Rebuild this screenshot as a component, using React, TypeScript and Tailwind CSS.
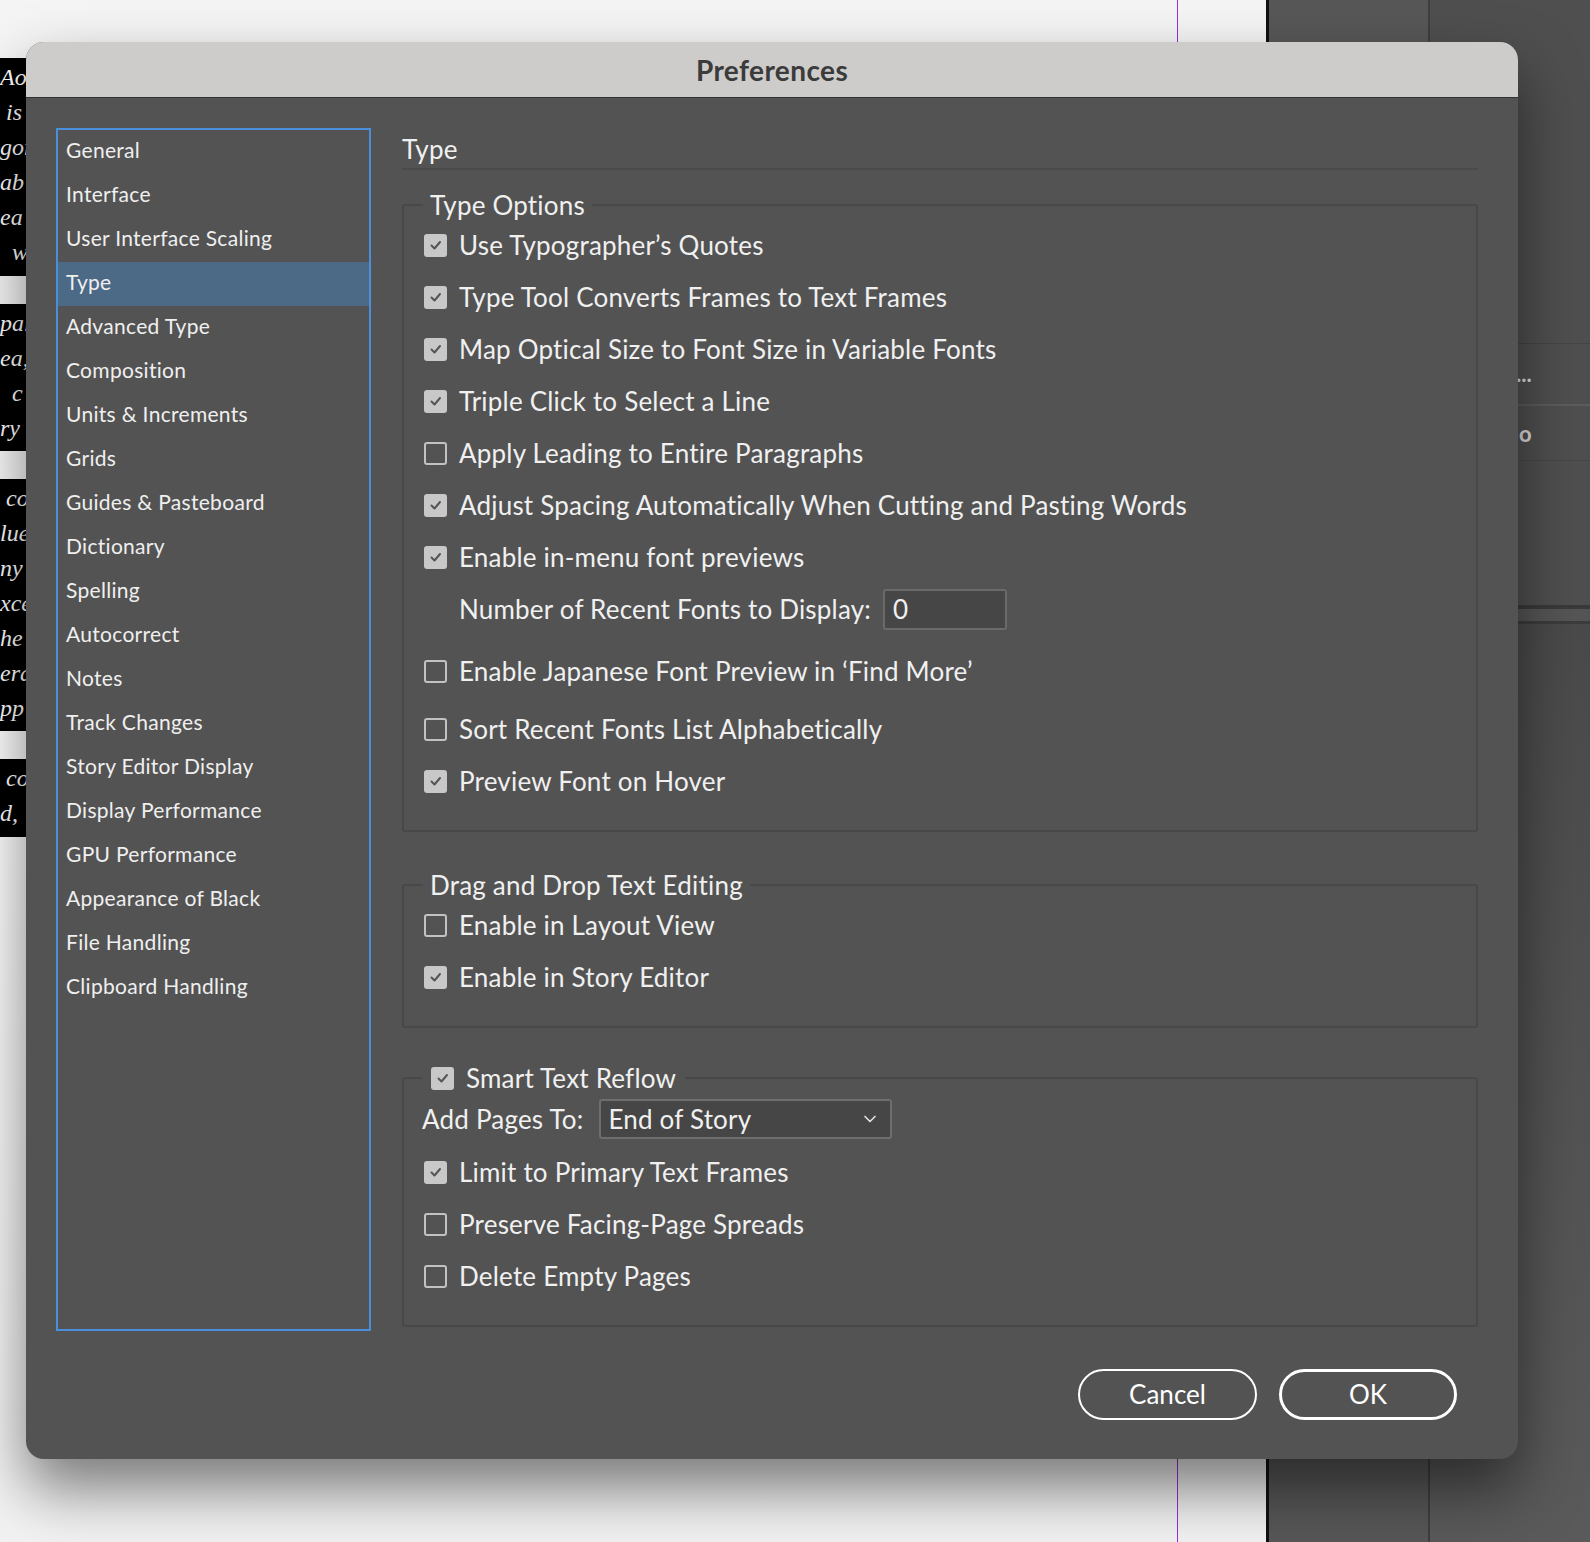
import React from 'react';
import { ChevronDown } from 'lucide-react';

const navItems = [
  'General',
  'Interface',
  'User Interface Scaling',
  'Type',
  'Advanced Type',
  'Composition',
  'Units & Increments',
  'Grids',
  'Guides & Pasteboard',
  'Dictionary',
  'Spelling',
  'Autocorrect',
  'Notes',
  'Track Changes',
  'Story Editor Display',
  'Display Performance',
  'GPU Performance',
  'Appearance of Black',
  'File Handling',
  'Clipboard Handling',
];

const Box: React.FC<{ on: boolean }> = ({ on }) =>
  on ? (
    <span className="w-[23px] h-[23px] rounded-[3px] bg-[#c8c8c8] flex items-center justify-center shrink-0">
      <svg width="16" height="16" viewBox="0 0 16 16">
        <path d="M3.5 8.5l3 3 5.5-6.5" fill="none" stroke="#555555" strokeWidth="2" strokeLinecap="round" strokeLinejoin="round" />
      </svg>
    </span>
  ) : (
    <span className="w-[23px] h-[23px] rounded-[3px] border-2 border-[#c2c2c2] shrink-0" />
  );

const Row: React.FC<{ on: boolean; label: string; className?: string }> = ({ on, label, className = '' }) => (
  <div className={`flex items-center h-[52px] gap-[12px] ${className}`}>
    <Box on={on} />
    <span>{label}</span>
  </div>
);

const scribbles = [
  { h: 'h-[218px]', lines: ['Ao', ' is', 'gor', 'ab', 'ea', '  w'] },
  { h: 'h-[147px]', lines: ['pal', 'ea,', '  c', 'ry'] },
  { h: 'h-[252px]', lines: [' co', 'lue', 'ny', 'xce', 'he', 'era', 'pp'] },
  { h: 'h-[78px]', lines: [' co', 'd,'] },
];

export default function App() {
  return (
    <div className="relative w-[1590px] h-[1542px] overflow-hidden bg-white [font-family:Lato,'Open_Sans',sans-serif]">
      {/* background: document + panels */}
      <div className="flex h-full">
        <div className="flex w-[1266px] h-full bg-gradient-to-b from-[#f4f4f4] via-white to-[#f2f2f2]">
          <div className="w-[26px] flex flex-col pt-[58px] gap-[28px] overflow-hidden">
            {scribbles.map((s, i) => (
              <div key={i} className={`${s.h} bg-black text-white italic text-[24px] leading-[35px] pt-[2px] whitespace-pre [font-family:'Liberation_Serif',serif]`}>
                {s.lines.map((l, j) => (
                  <div key={j}>{l}</div>
                ))}
              </div>
            ))}
          </div>
          <div className="w-[1151px]" />
          <div className="w-px h-full bg-[#9b2fd6]" />
        </div>
        <div className="w-[3px] h-full bg-[#111111]" />
        <div className="flex flex-1 h-full">
          <div className="w-[159px] h-full bg-[#575757]" />
          <div className="w-[2px] h-full bg-[#3f3f3f]" />
          <div className="flex-1 h-full bg-[#4f4f4f] flex flex-col text-[#dedede] font-bold text-[22px]">
            <div className="h-[344px] border-b border-[#454545]" />
            <div className="h-[62px] flex items-center pl-[86px] border-b-2 border-[#5c5c5c] leading-none">...</div>
            <div className="h-[55px] flex items-center pl-[89px] border-b border-[#474747]">o</div>
            <div className="h-[144px]" />
            <div className="h-[4px] bg-[#3a3a3a]" />
            <div className="h-[12px] bg-[#555555]" />
            <div className="h-[3px] bg-[#3c3c3c]" />
            <div className="flex-1 bg-gradient-to-b from-[#4a4a4a] to-[#5a5a5a]" />
          </div>
        </div>
      </div>

      {/* dialog */}
      <div className="absolute left-[26px] top-[42px] w-[1492px] rounded-[18px] overflow-hidden bg-[#535353] shadow-[0_30px_60px_rgba(0,0,0,0.5)]">
        <div className="h-[56px] bg-[#cdcccb] border-b border-[#333333] flex items-center justify-center">
          <span className="text-[28px] font-bold tracking-[0.4px] text-[#3b3b3b]">Preferences</span>
        </div>

        <div className="flex pt-[30px] pl-[30px] pr-[40px]">
          <div className="w-[315px] h-[1203px] border-2 border-[#4a8fdc] shrink-0">
            {navItems.map((item) => (
              <div
                key={item}
                className={`h-[44px] flex items-center pl-[8px] pb-[4px] text-[21px] tracking-[0.3px] text-[#efefef] ${item === 'Type' ? 'bg-[#4c6986]' : ''}`}
              >
                {item}
              </div>
            ))}
          </div>

          <div className="flex-1 ml-[31px] text-[26px] tracking-[0.2px] text-[#f0f0f0]">
            <div className="h-[42px] pt-[3px] flex items-center border-b-2 border-[#4a4a4a]">Type</div>

            <fieldset className="mt-[21px] border-2 border-[#484848] rounded-[3px]">
              <legend className="ml-[19px] px-[7px] leading-[28px]">Type Options</legend>
              <div className="pl-[20px] pb-[23px]">
                <Row on label="Use Typographer’s Quotes" />
                <Row on label="Type Tool Converts Frames to Text Frames" />
                <Row on label="Map Optical Size to Font Size in Variable Fonts" />
                <Row on label="Triple Click to Select a Line" />
                <Row on={false} label="Apply Leading to Entire Paragraphs" />
                <Row on label="Adjust Spacing Automatically When Cutting and Pasting Words" />
                <Row on label="Enable in-menu font previews" />
                <div className="h-[52px] flex items-center pl-[35px]">
                  <span>Number of Recent Fonts to Display:</span>
                  <div className="ml-[12px] w-[124px] h-[41px] rounded-[3px] border-2 border-[#6a6a6a] bg-[#464646] flex items-center pl-[8px]">
                    0
                  </div>
                </div>
                <Row on={false} label="Enable Japanese Font Preview in ‘Find More’" className="mt-[10px]" />
                <Row on={false} label="Sort Recent Fonts List Alphabetically" className="mt-[6px]" />
                <Row on label="Preview Font on Hover" />
              </div>
            </fieldset>

            <fieldset className="mt-[39px] border-2 border-[#484848] rounded-[3px]">
              <legend className="ml-[19px] px-[7px] leading-[28px]">Drag and Drop Text Editing</legend>
              <div className="pl-[20px] pb-[23px]">
                <Row on={false} label="Enable in Layout View" />
                <Row on label="Enable in Story Editor" />
              </div>
            </fieldset>

            <fieldset className="mt-[36px] border-2 border-[#484848] rounded-[3px]">
              <legend className="ml-[18px] px-[9px] leading-[28px]">
                <span className="flex items-center gap-[12px]">
                  <Box on />
                  <span>Smart Text Reflow</span>
                </span>
              </legend>
              <div className="pl-[18px] pb-[23px]">
                <div className="h-[54px] flex items-center">
                  <span>Add Pages To:</span>
                  <div className="ml-[16px] w-[293px] h-[40px] rounded-[3px] border-2 border-[#6e6e6e] bg-[#464646] flex items-center justify-between pl-[7px] pr-[10px]">
                    <span>End of Story</span>
                    <ChevronDown size={20} strokeWidth={2} className="text-[#e0e0e0]" />
                  </div>
                </div>
                <Row on label="Limit to Primary Text Frames" className="pl-[2px]" />
                <Row on={false} label="Preserve Facing-Page Spreads" className="pl-[2px]" />
                <Row on={false} label="Delete Empty Pages" className="pl-[2px]" />
              </div>
            </fieldset>
          </div>
        </div>

        <div className="flex justify-end gap-[22px] pr-[61px] mt-[38px] pb-[39px] text-[26px] text-white">
          <button className="w-[179px] h-[51px] rounded-full border-2 border-white">Cancel</button>
          <button className="w-[178px] h-[51px] rounded-full border-[3px] border-white">OK</button>
        </div>
      </div>
    </div>
  );
}
